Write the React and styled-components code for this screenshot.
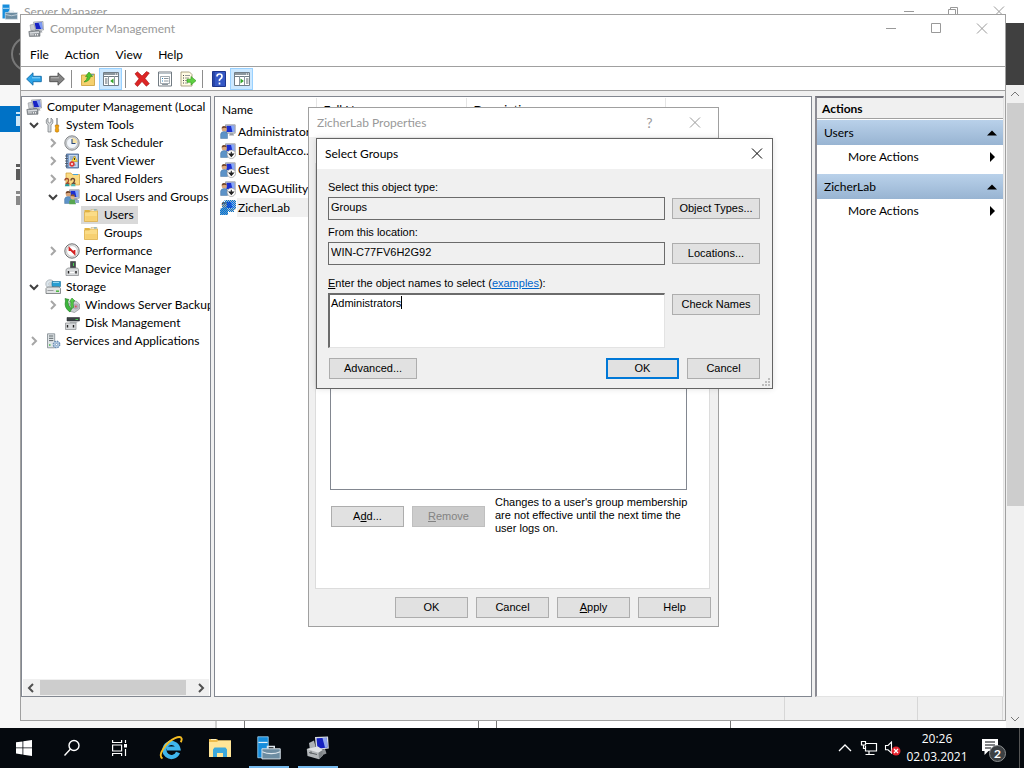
import React from 'react';
import styled, { createGlobalStyle, css } from 'styled-components';

const ui = 'Lato, "Open Sans", sans-serif';
const classic = '"Liberation Sans", Arial, sans-serif';

const Global = createGlobalStyle`
  * { box-sizing: border-box; }
  body { margin: 0; font: 12px/18px ${ui}; color: #000; overflow: hidden; }
  button, input, textarea { font: inherit; color: inherit; margin: 0; }
  svg { display: block; flex: none; }
  h1, h2, p, ul { margin: 0; padding: 0; font: inherit; list-style: none; }
`;

const Screen = styled.div`
  height: 100vh;
  display: flex;
  flex-direction: column;
`;
const Desktop = styled.main`
  position: relative;
  flex: 1;
  min-height: 0;
  overflow: hidden;
`;

/* ---------- window frame ---------- */
const Frame = styled.section`
  display: flex;
  flex-direction: column;
  position: absolute;
  background: ${(p) => p.$bg || '#fff'};
  border: ${(p) => (p.$edge ? `1px solid ${p.$edge}` : '0')};
`;
const ServerFrame = styled(Frame)` inset: 0; `;
const ManagementFrame = styled(Frame)` inset: 14px 18px 7px 20px; `;
const PropertiesFrame = styled(Frame)`
  left: 308px; top: 107px; width: 411px;
`;
const SelectFrame = styled(Frame)`
  left: 316px; top: 138px; width: 457px;
  box-shadow: 0 0 6px rgba(0, 0, 0, 0.12);
`;
const TitleBar = styled.header`
  display: flex;
  align-items: center;
  height: ${(p) => p.$h}px;
  padding-left: ${(p) => p.$left}px;
  padding-right: ${(p) => p.$right || 0}px;
  background: #fff;
  color: ${(p) => (p.$active ? '#000' : '#999')};
  flex: none;
`;
const Title = styled.h1` flex: 1; svg + & { padding-left: 6px; } `;
const CaptionButton = styled.button`
  width: ${(p) => p.$w || 46}px;
  height: 100%;
  border: 0;
  padding: 0;
  background: none;
  display: grid;
  place-items: center;
`;

const Caption = ({ kind, w }) => (
  <CaptionButton $w={w} aria-label={kind}>
    <svg width="12" height="12" viewBox="0 0 12 12" fill="none" stroke="currentColor">
      {kind === 'Minimize' && <path d="M1 5.500h10" />}
      {kind === 'Maximize' && <path d="M.5 .5h9v9h-9z" />}
      {kind === 'Restore' && <path d="M.5 3.500h7v7h-7zM2.500 3.500v-2h7v7h-2" />}
      {kind === 'Close' && <path d="M1 .5l10 10M11 .5L1 10.500" />}
    </svg>
  </CaptionButton>
);

/* ---------- icons ---------- */
const Svg = ({ s = 16, children, ...r }) => (
  <svg width={s} height={s} viewBox="0 0 16 16" fill="none" {...r}>{children}</svg>
);
const ComputerIcon = ({ s }) => (
  <Svg s={s}>
    <path d="M5.500 1l9.500-.5.500 8.500-8 .500z" fill="#d6dae0" stroke="#85898f" strokeWidth=".6" />
    <path d="M6.700 2l7.300-.4.400 6.400-6.500.3z" fill="#1722c4" />
    <path d="M10.500 1.800l3.500-.2.400 6.400-1.400.1z" fill="#7d9cf4" />
    <path d="M2 4l4-1 1.500 5.500L3 10z" fill="#c9ccd0" stroke="#888c90" strokeWidth=".5" />
    <path d="M9 9.500h4.500l1 2H9z" fill="#a2a6ab" />
    <path d="M.8 10.500l9.700-1.300 1.500 2.300v3.700l-10.500.3z" fill="#8f9499" stroke="#53585c" strokeWidth=".5" />
    <path d="M1.500 11.300l9.500-.8v1.500l-9 .7z" fill="#d9dcdf" />
    <path d="M3 13v1.500M5 13v1.500M7.500 13v1.500M9.500 13v1.500" stroke="#eee" />
  </Svg>
);
const ConsoleIcon = () => (
  <svg width="24" height="24" viewBox="0 0 24 24">
    <path d="M9 1l13-.5.800 12L10 14z" fill="#d8dde3" />
    <path d="M10.500 2.200l10.300-.5.700 9.800-10 1.200z" fill="#1420c0" />
    <path d="M16.500 2l4.300-.3.700 9.800-2.500.3z" fill="#8fa6ef" />
    <path d="M3 7l5-2.500 2 8L4 14z" fill="#aeb2b6" />
    <path d="M13 14l6-1 1.500 4.500-5 2z" fill="#8e9296" />
    <path d="M.8 13l11-2.500 5 3.500v5.500L13 23.300 1.500 20z" fill="#b4b8bb" />
    <path d="M.8 13l11-2.500 5 3.500-4.300 2.800z" fill="#e1e3e5" />
    <path d="M12.500 16.800l4.300-2.800v5.500L13 23.300z" fill="#7d8286" />
    <path d="M3 16.500l8 2M5 15.300v2.500" stroke="#5b5f63" />
  </svg>
);
const ToolsIcon = () => (
  <Svg>
    <path d="M3 1v4l1.500 1L6 5V1l1.800 2v3L6 8v7H3V8L1.300 6V3z" fill="#d5d8da" stroke="#74797d" strokeWidth=".7" />
    <path d="M12 1v7" stroke="#7c8185" strokeWidth="1.300" />
    <path d="M10.300 8h3.400v2l-.7 1 .7 1v2.500q-1.700 1.500-3.400 0V12l.7-1-.7-1z" fill="#f0a30d" stroke="#b87405" strokeWidth=".6" />
  </Svg>
);
const ClockIcon = () => (
  <Svg>
    <circle cx="8" cy="8" r="7.200" fill="#cfd1d3" stroke="#7b7e81" strokeWidth=".9" />
    <circle cx="8" cy="8" r="5.500" fill="#f2f6fb" stroke="#9b9fa3" strokeWidth=".5" />
    <path d="M8 2.800A5.200 5.200 0 0 1 13.200 8H8z" fill="#f6e2a4" />
    <path d="M8 4v4.500h3.500" stroke="#2c4a78" strokeWidth="1.100" />
  </Svg>
);
const EventIcon = () => (
  <Svg>
    <path d="M2.500 1h12v14h-12z" fill="#7fa0cb" stroke="#415f8d" strokeWidth=".8" />
    <path d="M5 2h8.500v12H5z" fill="#c6d8ee" />
    <path d="M6 4h6M6 6h6M6 12h6" stroke="#54759f" strokeWidth=".7" />
    <path d="M1 3h3M1 5.500h3M1 8h3M1 10.500h3M1 13h3" stroke="#47505c" strokeWidth=".8" />
    <path d="M10.500 3l3 5.500h-6z" fill="#ffd93b" stroke="#b28b00" strokeWidth=".5" />
    <path d="M10.500 5v2" stroke="#222" strokeWidth=".9" />
    <circle cx="8" cy="11" r="2.700" fill="#db3939" /><path d="M7 10l2 2M9 10l-2 2" stroke="#fff" strokeWidth=".7" />
  </Svg>
);
const FolderIcon = () => (
  <Svg>
    <path d="M1.500 3h5l1 1.500h7v10h-13z" fill="#e2b544" />
    <path d="M8 2.500h6v3H8z" fill="#fff" stroke="#c0a050" strokeWidth=".5" /><path d="M11 3h2.500" stroke="#48a2dc" />
    <path d="M1.500 5h5l1-1h7v10.500h-13z" fill="#fbdc87" stroke="#d7a63c" strokeWidth=".6" />
    <path d="M2.300 9h11.500v4.800H2.300z" fill="#f7d070" />
  </Svg>
);
const SharedIcon = () => (
  <Svg>
    <path d="M2 2h5l1 1.500h7.500V14H2z" fill="#fadb84" stroke="#cf9c32" strokeWidth=".7" />
    <path d="M9 3.500h5" stroke="#48a2dc" />
    <path d="M1 9.500q0-2 1.800-2t1.700 2q0 1.500-1.800 3h2.800" stroke="#a0482c" strokeWidth="1.400" />
    <path d="M7 9.500q0-2 1.800-2t1.700 2q0 1.500-1.800 3h2.800" stroke="#6c4a34" strokeWidth="1.400" />
    <path d="M.8 15.200q.2-2.400 2.400-2.400t2.400 2.400z" fill="#2b9997" /><path d="M6.800 15.200q.2-2.400 2.400-2.400t2.400 2.400z" fill="#52b9b1" />
  </Svg>
);
const UserMonitorIcon = ({ group, down, selected }) => (
  <Svg>
    <path d="M5.500.8h9.700v8.400H6z" fill="#cfd4db" stroke="#74797f" strokeWidth=".6" />
    <path d="M6.500 1.800h7.700v6.200H6.500z" fill="#1d2fd0" /><path d="M11 1.800h3.200v6.200h-1.800z" fill="#86a8fa" />
    <path d="M10 9.200h3l1.200 2.300H9z" fill="#999ea4" />
    <circle cx="4.200" cy="5" r="2.500" fill="#dba77b" /><path d="M1.700 4.600Q1.500 2 4 2t2.800 2.200L4.500 3.700z" fill="#70452a" />
    <path d="M.6 14.500V10q.5-2.500 3.500-2.500T7.500 10v4.500z" fill="#5d93c8" stroke="#33618f" strokeWidth=".4" />
    {group && <><circle cx="8.500" cy="8" r="2.200" fill="#e2b588" /><path d="M6.500 7Q7 5 9 5.200t2 2.300z" fill="#8b5732" /><path d="M5.300 15.300v-3q.6-2 3.200-2t3.300 2v3z" fill="#58a651" /><path d="M11 11h4v3h-4z" fill="#91aad0" /></>}
    {down && <><circle cx="11.300" cy="11.300" r="4.200" fill="#fff" stroke="#888" strokeWidth=".6" /><path d="M11.300 8.700v4M9.200 11l2.100 2.400 2.100-2.400z" stroke="#222" strokeWidth="1.100" fill="#222" /></>}
    {selected && <>
      <defs><pattern id="sel" width="2" height="2" patternUnits="userSpaceOnUse"><path d="M0 0h1v1H0zM1 1h1v1H1z" fill="#0078d7" /></pattern></defs>
      <path d="M5 0H16v9h-2v3H8v3H0V9l2-1V3z" fill="url(#sel)" />
    </>}
  </Svg>
);
const PerformanceIcon = () => (
  <Svg>
    <circle cx="8" cy="8" r="7.200" fill="#e6e6e6" stroke="#6e7072" /><circle cx="8" cy="8" r="5.400" fill="#fff" stroke="#9a9a9a" strokeWidth=".5" />
    <path d="M5.500 8V5.500L10.500 10.500V7" stroke="#d42121" strokeWidth="1.800" />
  </Svg>
);
const DeviceIcon = () => (
  <Svg>
    <path d="M6.500.5h5v6.500h-5z" fill="#44494c" stroke="#26292b" strokeWidth=".5" /><path d="M9.500 2v3" stroke="#48ce50" />
    <path d="M2 8.500L4 7h9.500l1 1.500v6H2z" fill="#d8dadc" stroke="#85888b" strokeWidth=".7" />
    <path d="M4.500 10v2.500M12 10v2.500" stroke="#222" strokeWidth="1.400" /><path d="M6 11.500h4" stroke="#fff" />
  </Svg>
);
const StorageIcon = () => (
  <Svg>
    <circle cx="5" cy="5" r="4.200" fill="#dce5eb" stroke="#90999f" strokeWidth=".6" /><circle cx="5" cy="5" r="1.200" fill="#fff" stroke="#8b9297" strokeWidth=".5" />
    <path d="M7 2.500h8.500v5H7z" fill="#289ed2" stroke="#176b93" strokeWidth=".6" /><path d="M8 3.500h6" stroke="#93d6f2" />
    <path d="M1 9.500L2.500 8h11.700l1.300 1.500v5H1z" fill="#e0e2e3" stroke="#6f7376" strokeWidth=".8" /><path d="M2.500 11.500h6" stroke="#9a9da0" /><path d="M11 12.200h3" stroke="#48b93b" strokeWidth="1.500" />
  </Svg>
);
const BackupIcon = () => (
  <Svg>
    <path d="M5 6l7-2 3.500 3v5l-5 3.500L5 14z" fill="#cdd2d4" stroke="#7b8285" strokeWidth=".6" />
    <circle cx="11.800" cy="9.500" r="3" fill="#b3a9b8" /><circle cx="11.800" cy="9.500" r="1" fill="#d55" />
    <path d="M1 1.500l4 1-1 1.500q-.5 5 3.500 8l-1.500 3Q-.3 11 1.500 4z" fill="#3cb53c" stroke="#1b7b1d" strokeWidth=".6" />
    <path d="M5.500 4.500L8 1l3 3H9.500q-.5 3 0 6.500L7.500 12Q6 8 7 4.700z" fill="#54cb48" stroke="#1b7b1d" strokeWidth=".5" />
  </Svg>
);
const DiskIcon = () => (
  <Svg>
    <path d="M3 2.500h12.500v3.500H3z" fill="#3d4245" stroke="#1f2224" strokeWidth=".5" /><path d="M11.500 4.500h2.500" stroke="#48ce50" />
    <path d="M5 6h9l-1 2H6z" fill="#b9bcbe" />
    <path d="M1.500 8h10.500v6.500H1.500z" fill="#d8dadc" stroke="#85888b" strokeWidth=".7" />
    <path d="M3.500 10v2.500M9.500 10v2.500" stroke="#222" strokeWidth="1.400" />
  </Svg>
);
const ServicesIcon = () => (
  <Svg>
    <path d="M2.500.8h7.200v14H2.500z" fill="#dfe4e7" stroke="#7c858b" strokeWidth=".8" />
    <path d="M4 3h4.300M4 5.300h4.300M4 7.600h4.300" stroke="#5b6469" /><path d="M4 12h1.500" stroke="#49b94a" strokeWidth="1.300" />
    <circle cx="11.500" cy="11.500" r="3.200" fill="#b9cfe6" stroke="#6e8fb4" strokeWidth="1.400" strokeDasharray="1.600 .9" /><circle cx="11.500" cy="11.500" r="1.100" fill="#fff" stroke="#6485aa" strokeWidth=".6" />
  </Svg>
);
const Arrow = ({ flip }) => (
  <Svg>
    <path transform={flip ? 'translate(16 0) scale(-1 1)' : undefined} d="M.6 8L7 1.800v3.500h8.300v5.400H7v3.500z"
      fill={flip ? '#858585' : '#2ba3e8'} stroke={flip ? '#4c4c4c' : '#136ba8'} strokeWidth=".9" />
    <path d={flip ? 'M2 6.800h8' : 'M6 6.800h8'} stroke={flip ? '#b6b6b6' : '#8fd4fa'} />
  </Svg>
);
const UpFolderIcon = () => (
  <Svg>
    <path d="M1.500 4h5l1-1h7v11.500h-13z" fill="#f5d06e" stroke="#c99d36" strokeWidth=".8" /><path d="M11 3.800h3" stroke="#4892c8" />
    <path d="M4 11Q7 9 7.500 5.500H5.500L9 1l3.500 4.500h-2Q9.500 10.500 4 11z" fill="#4fc52f" stroke="#2f8d17" strokeWidth=".6" />
  </Svg>
);
const PaneIcon = ({ right }) => (
  <Svg>
    <path d="M.5 1.500h15v13H.5z" fill="#fff" stroke="#717d86" /><path d="M1 3h14" stroke="#8c979e" strokeWidth="2" />
    <path d="M12 3h1M14 3h1" stroke="#fff" /><path d="M1 5.500h14" stroke="#717d86" />
    <path d={right ? 'M10.500 5v9M5.500 5v9' : 'M5.500 5v9M11.500 5v9'} stroke="#8c979e" />
    <path d={right ? 'M6.500 7.500v5L9.800 10z' : 'M10.500 7.500v5L7.200 10z'} fill="#31a427" />
    <path d={right ? 'M12 8h2.500M12 10h2.500M12 12h2.500' : 'M2 8h2.500M2 10h2.500M2 12h2.500'} stroke="#5a656d" />
  </Svg>
);
const DeleteIcon = () => (
  <Svg><path d="M1 2.800L3.500.8 8 5l4.500-4.500L15.300 2 11 7.500l4.300 5.200-3 2.500L8 10.500l-4.500 5L.8 13 5 7.800z" fill="#dd2525" stroke="#a51313" strokeWidth=".6" /></Svg>
);
const PropsIcon = () => (
  <Svg>
    <path d="M1.500 1h13v14h-13z" fill="#fff" stroke="#727b82" /><path d="M2 2.500h12" stroke="#b9c3ca" />
    <path d="M3.500 5.500h9v7h-9z" stroke="#8c969d" strokeWidth=".8" /><path d="M5 7.500h1M5 10h1" stroke="#2f83bd" /><path d="M7 7.500h4.500M7 10h4.500M5 13.500h6" stroke="#8c969d" />
  </Svg>
);
const ExportIcon = () => (
  <Svg>
    <path d="M1 1h8.500L12 3.500V15H1z" fill="#fffbe4" stroke="#99916b" strokeWidth=".8" /><path d="M3 4.500h1M3 7h1M3 9.500h1M3 12h1" stroke="#444" /><path d="M5 4.500h5M5 7h4M5 9.500h2M5 12h3" stroke="#9a9a9a" />
    <path d="M7 8.200h4V5.500l5 4.200-5 4.300v-2.700H7z" fill="#5fd043" stroke="#2b9618" strokeWidth=".6" />
  </Svg>
);
const HelpIcon = () => (
  <Svg>
    <path d="M1.500.5h13v15h-13z" fill="#3558c5" stroke="#1e358c" /><path d="M3 1v14" stroke="#1e358c" />
    <path d="M6 5.500Q6 3 8.500 3T11 5.300Q11 7 9.500 7.800T8.500 10M8.500 11.500v2" stroke="#fff" strokeWidth="1.700" />
  </Svg>
);
const ServerIcon = ({ s = 16 }) => (
  <Svg s={s}>
    <path d="M.5.500h7v14h-7z" fill="#168ddc" stroke="#a9d9f5" strokeWidth={s > 20 ? '.5' : '0'} /><path d="M1 4.300h6" stroke="#e6f4fc" strokeWidth=".8" />
    <path d="M7 8.300V7h4.500v1.300" stroke="#dfe8ee" /><path d="M3.300 8.500h12.200v6.800H3.300z" fill="#6d8da2" stroke="#dfe8ee" strokeWidth=".6" /><path d="M3.500 10.500q6 2.500 12 0" stroke="#dfe8ee" strokeWidth=".7" />
  </Svg>
);
const Chevron = ({ dir = 'right', color = '#a2a2a2', w = 2 }) => {
  const d = { right: 'M3 1l4 4-4 4', left: 'M7 1L3 5l4 4', down: 'M1 3l4 4 4-4', up: 'M1 7l4-4 4 4' }[dir];
  return <svg width="10" height="10" viewBox="0 0 10 10" fill="none" stroke={color} strokeWidth={w}><path d={d} /></svg>;
};

/* ---------- server manager ---------- */
const ServerHeader = styled.div`
  height: 62px; flex: none; background: #404040; padding: 13px 11px;
`;
const ServerBody = styled.div` flex: 1; display: flex; min-height: 0; background: #fff; `;
const SideNav = styled.nav`
  width: 217px; background: #f7f7f7; border-right: 2px solid #cfcfcf; padding-top: 21px;
  display: flex; flex-direction: column;
`;
const NavItem = styled.button`
  height: 26px; border: 0; padding: 0 0 0 16px; text-align: left;
  background: ${(p) => (p.$active ? '#0072c6' : 'transparent')};
`;
const NavList = styled.div` padding-top: 26px; display: flex; flex-direction: column; `;
const Dashboard = styled.div` flex: 1; display: flex; gap: 17px; padding-left: 27px; `;
const Panel = styled.div` width: 235px; border: solid #777; border-width: 0 1px; `;
const VScroll = styled.div`
  width: 18px; background: #f0f0f0; display: flex; flex-direction: column; align-items: center;
  justify-content: space-between; padding: 4px 0;
`;
const VThumb = styled.div` width: 17px; flex: 0 0 403px; background: #cdcdcd; margin: 4px 0 auto; `;

const ServerManager = () => (
  <ServerFrame>
    <TitleBar $h={23} $left={2} $right={2}>
      <ServerIcon /><Title>Server Manager</Title>
      <Caption kind="Minimize" w={45} /><Caption kind="Restore" w={45} /><Caption kind="Close" />
    </TitleBar>
    <ServerHeader>
      <svg width="36" height="36" viewBox="0 0 36 36" fill="none" stroke="#787878" strokeWidth="2">
        <circle cx="18" cy="18" r="17" /><path d="M26 18H9M16 11l-7 7 7 7" />
      </svg>
    </ServerHeader>
    <ServerBody>
      <SideNav>
        <NavItem $active aria-label="Dashboard"><svg width="16" height="16"><path d="M0 1h16v14H0z" fill="#cfe8f8" /><path d="M0 4h16" stroke="#0072c6" strokeWidth="2" /></svg></NavItem>
        <NavList>
          <NavItem aria-label="Local Server"><svg width="16" height="20"><path d="M0 3h16v3H0zM0 8h16v11H0z" fill="#5b5b5b" /></svg></NavItem>
          <NavItem aria-label="All Servers"><svg width="16" height="18"><path d="M0 3h16v3H0zM0 8h16v9H0z" fill="#888" /></svg></NavItem>
        </NavList>
      </SideNav>
      <Dashboard><Panel /><Panel /></Dashboard>
      <VScroll><Chevron dir="up" w={1} color="#777" /><VThumb /><Chevron dir="down" w={1} color="#777" /></VScroll>
    </ServerBody>
  </ServerFrame>
);

/* ---------- computer management ---------- */
const MenuBar = styled.nav` display: flex; height: 23px; padding-left: 1px; flex: none; `;
const MenuItem = styled.button` border: 0; background: none; padding: 0 8px; line-height: 23px; `;
const ToolBar = styled.div`
  display: flex; align-items: center; height: 25px; padding: 1px 0 0 1px; flex: none;
  border: solid; border-width: 1px 0; border-color: #a0a0a0 #d9d9d9;
`;
const ToolButton = styled.button`
  width: 23px; height: 22px; padding: 0; display: grid; place-items: center;
  border: 1px solid ${(p) => (p.$on ? '#99d1ff' : 'transparent')};
  background: ${(p) => (p.$on ? '#cce8ff' : 'transparent')};
`;
const ToolRule = styled.span` width: 1px; height: 18px; margin: 0 4px 0 3px; background: #8d8d8d; `;
const Panes = styled.div`
  flex: 1; min-height: 0; background: #f0f0f0; padding: 5px 1px 0 0;
  display: grid; grid-template-columns: 190px 1fr 189px; gap: 3px;
`;
const Pane = styled.div`
  background: #fff; border: 1px solid #828790; overflow: hidden; min-width: 0;
  display: flex; flex-direction: column;
`;
const Tree = styled.ul` padding-top: 1px; flex: 1; overflow: hidden; `;
const TreeRow = styled.li`
  display: flex; align-items: center; height: 18px; white-space: nowrap;
  padding-left: ${(p) => p.$level * 19 - 12}px;
  &:first-child { padding-left: 4px; }
`;
const Twisty = styled.span` width: 16px; flex: none; `;
const TreeLabel = styled.span`
  display: flex; align-items: center; gap: 5px; height: 18px;
  padding-right: 4px;
  ${(p) => p.$selected && css`background: #d9d9d9; margin-left: -2px; padding-left: 2px;`}
`;
const HScroll = styled.div`
  height: 17px; margin: 0 1px; background: #f0f0f0; display: flex; align-items: center; padding: 0 3px;
`;
const HThumb = styled.div` flex: 1; margin: 0 10px 0 4px; height: 15px; background: #cdcdcd; `;

const tree = [
  [0, '', ComputerIcon, 'Computer Management (Local'],
  [1, 'down', ToolsIcon, 'System Tools'],
  [2, 'right', ClockIcon, 'Task Scheduler'],
  [2, 'right', EventIcon, 'Event Viewer'],
  [2, 'right', SharedIcon, 'Shared Folders'],
  [2, 'down', (p) => <UserMonitorIcon group {...p} />, 'Local Users and Groups'],
  [3, '', FolderIcon, 'Users', true],
  [3, '', FolderIcon, 'Groups'],
  [2, 'right', PerformanceIcon, 'Performance'],
  [2, '', DeviceIcon, 'Device Manager'],
  [1, 'down', StorageIcon, 'Storage'],
  [2, 'right', BackupIcon, 'Windows Server Backup'],
  [2, '', DiskIcon, 'Disk Management'],
  [1, 'right', ServicesIcon, 'Services and Applications'],
];

const Table = styled.table`
  border-collapse: collapse; table-layout: fixed; width: 450px; margin-top: 1px;
`;
const Th = styled.th`
  width: ${(p) => p.$w}px; height: 24px; padding: 0 7px; text-align: left; font-weight: 400;
  border-right: 1px solid #e5e5e5;
`;
const Td = styled.td` height: 19px; padding: 0 0 0 5px; white-space: nowrap; `;
const User = styled.span` display: flex; gap: 1px; align-items: center; `;
const UserName = styled.span`
  padding: 0 1px; line-height: 19px; flex: 1; background: ${(p) => (p.$selected ? '#f0f0f0' : 'none')};
`;
const users = [['Administrator'], ['DefaultAcco...', true], ['Guest', true], ['WDAGUtility...', true], ['ZicherLab', false, true]];

const ActionsPane = styled.aside`
  background: #fff; border: solid; border-width: 2px 1px 1px 2px; border-color: #73737b #e3e3e3 #e3e3e3 #8c8c94;
`;
const ActionsTitle = styled.h2`
  font-weight: 700; height: 21px; line-height: 22px; padding-left: 5px; background: #f0f0f0;
  border-bottom: 1px solid #a0a0a0; margin-bottom: 1px;
`;
const ActionsGroup = styled.button`
  display: flex; justify-content: space-between; align-items: center; width: 100%; height: 25px;
  border: 0; padding: 0 6px 0 7px; background: linear-gradient(#b9d1ea, #98b4d2);
`;
const ActionsItem = styled(ActionsGroup)`
  height: 24px; margin-bottom: 5px; padding-left: 31px; background: none;
`;
const Triangle = ({ side }) => (
  <svg width="10" height="10" viewBox="0 0 10 10"><path d={side ? 'M3 0l5 5-5 5z' : 'M0 7.500l5-5 5 5z'} /></svg>
);
const StatusBar = styled.footer`
  height: 23px; flex: none; background: #f0f0f0; display: flex; justify-content: flex-end; padding-right: 2px;
`;
const StatusCell = styled.span` width: ${(p) => p.$w}px; border-left: 1px solid #d7d7d7; `;
const EndCell = styled(StatusCell)` border-right: 1px solid #d7d7d7; `;

const ComputerManagement = () => (
  <ManagementFrame $edge="#a0a0a0">
    <TitleBar $h={28} $left={7}>
      <ComputerIcon /><Title>Computer Management</Title>
      <Caption kind="Minimize" /><Caption kind="Maximize" w={45} /><Caption kind="Close" />
    </TitleBar>
    <MenuBar>{['File', 'Action', 'View', 'Help'].map((m) => <MenuItem key={m}>{m}</MenuItem>)}</MenuBar>
    <ToolBar>
      <ToolButton aria-label="Back"><Arrow /></ToolButton>
      <ToolButton aria-label="Forward"><Arrow flip /></ToolButton>
      <ToolRule />
      <ToolButton aria-label="Up"><UpFolderIcon /></ToolButton>
      <ToolButton $on aria-label="Show console tree"><PaneIcon /></ToolButton>
      <ToolRule />
      <ToolButton aria-label="Delete"><DeleteIcon /></ToolButton>
      <ToolButton aria-label="Properties"><PropsIcon /></ToolButton>
      <ToolButton aria-label="Export list"><ExportIcon /></ToolButton>
      <ToolRule />
      <ToolButton aria-label="Help"><HelpIcon /></ToolButton>
      <ToolButton $on aria-label="Show action pane"><PaneIcon right /></ToolButton>
    </ToolBar>
    <Panes>
      <Pane>
        <Tree>
          {tree.map(([level, open, Icon, label, selected]) => (
            <TreeRow key={label} $level={level}>
              {level > 0 && <Twisty>{open && <Chevron dir={open} color={open === 'down' ? '#404040' : '#a6a6a6'} />}</Twisty>}
              <TreeLabel $selected={selected}><Icon />{label}</TreeLabel>
            </TreeRow>
          ))}
        </Tree>
        <HScroll><Chevron dir="left" color="#505050" /><HThumb /><Chevron color="#505050" /></HScroll>
      </Pane>
      <Pane>
        <Table>
          <thead><tr><Th $w={101}>Name</Th><Th $w={150}>Full Name</Th><Th $w={199}>Description</Th></tr></thead>
          <tbody>
            {users.map(([name, down, selected]) => (
              <tr key={name}>
                <Td><User><UserMonitorIcon down={down} selected={selected} /><UserName $selected={selected}>{name}</UserName></User></Td>
                <Td /><Td />
              </tr>
            ))}
          </tbody>
        </Table>
      </Pane>
      <ActionsPane>
        <ActionsTitle>Actions</ActionsTitle>
        <ActionsGroup>Users<Triangle /></ActionsGroup>
        <ActionsItem>More Actions<Triangle side /></ActionsItem>
        <ActionsGroup>ZicherLab<Triangle /></ActionsGroup>
        <ActionsItem>More Actions<Triangle side /></ActionsItem>
      </ActionsPane>
    </Panes>
    <StatusBar><StatusCell $w={133} /><EndCell $w={86} /></StatusBar>
  </ManagementFrame>
);

/* ---------- dialogs ---------- */
const Push = styled.button`
  width: ${(p) => (p.$wide ? 88 : 73)}px; height: 21px; padding: 0; flex: none;
  font: 11px/13px ${classic};
  background: #e1e1e1; border: 1px solid #adadad;
  ${(p) => p.$default && css`border: 2px solid #0078d7;`}
  &:disabled { background: #ccc; border-color: #bfbfbf; color: #838383; }
`;
const Sheet = styled.div`
  margin: 26px 8px 0 6px; background: #fff; border: 1px solid #dcdcdc; padding: 24px 22px 53px 14px;
`;
const MemberList = styled.div` height: 302px; border: 1px solid #828790; `;
const MemberRow = styled.div` display: flex; gap: 8px; padding: 6px 0 0 1px; `;
const MemberButtons = styled.div` display: flex; gap: 8px; padding-top: 10px; `;
const Note = styled.p` font: 11px/13px ${classic}; padding-left: 2px; flex: 1; white-space: pre; `;
const DialogFooter = styled.div` display: flex; justify-content: flex-end; gap: 8px; padding: 8px 7px 8px 0; `;
const HelpMark = styled.button` border: 0; padding: 0; width: 45px; background: none; font-size: 14px; `;

const PropertiesDialog = () => (
  <PropertiesFrame $bg="#f0f0f0" $edge="#a0a0a0">
    <TitleBar $h={29} $left={8}>
      <Title>ZicherLab Properties</Title>
      <HelpMark>?</HelpMark><Caption kind="Close" />
    </TitleBar>
    <Sheet>
      <MemberList />
      <MemberRow>
        <MemberButtons><Push>A<u>d</u>d...</Push><Push disabled><u>R</u>emove</Push></MemberButtons>
        <Note>{"Changes to a user's group membership\nare not effective until the next time the\nuser logs on."}</Note>
      </MemberRow>
    </Sheet>
    <DialogFooter><Push>OK</Push><Push>Cancel</Push><Push><u>A</u>pply</Push><Push>Help</Push></DialogFooter>
  </PropertiesFrame>
);

const Form = styled.form` position: relative; padding: 12px 12px 9px 11px; font: 11px/13px ${classic}; `;
const Label = styled.label` display: block; margin-bottom: 3px; `;
const FieldRow = styled.div`
  display: flex; gap: 7px; margin-bottom: ${(p) => p.$after}px;
  & > button { margin-top: 1px; }
`;
const Field = styled.input`
  flex: 1; min-width: 0; height: 23px; padding: 0 2px 3px; background: #f0f0f0; border: 1px solid #6b6b6b; border-radius: 0; outline: 0;
`;
const NamesWrap = styled.div` flex: 1; position: relative; display: flex; `;
const Names = styled.textarea`
  flex: 1; min-width: 0; height: 55px; resize: none; outline: 0; background: #fff; padding: 2px 1px;
  border: solid; border-width: 2px 1px 1px 2px; border-color: #6b6b6b #e3e3e3 #e3e3e3 #6b6b6b; border-radius: 0;
`;
const Caret = styled.span` position: absolute; left: 73px; top: 3px; width: 1px; height: 13px; background: #000; `;
const Link = styled.a` color: #0066cc; `;
const FormButtons = styled.div` display: flex; gap: 8px; padding-left: 1px; `;
const AdvancedPush = styled(Push)` margin-right: auto; `;
const Grip = styled.svg` position: absolute; right: 1px; bottom: 1px; `;

const SelectDialog = () => (
  <SelectFrame $bg="#f0f0f0" $edge="#646464">
    <TitleBar $h={30} $left={8} $active>
      <Title>Select Groups</Title><Caption kind="Close" w={30} />
    </TitleBar>
    <Form onSubmit={(e) => e.preventDefault()}>
      <Label htmlFor="type">Select this object type:</Label>
      <FieldRow $after={6}><Field id="type" readOnly value="Groups" /><Push type="button" $wide>Object Types...</Push></FieldRow>
      <Label htmlFor="location">From this location:</Label>
      <FieldRow $after={12}><Field id="location" readOnly value="WIN-C77FV6H2G92" /><Push type="button" $wide>Locations...</Push></FieldRow>
      <Label htmlFor="names"><u>E</u>nter the object names to select (<Link href="#examples">examples</Link>):</Label>
      <FieldRow $after={10}>
        <NamesWrap><Names id="names" defaultValue="Administrators" /><Caret /></NamesWrap>
        <Push type="button" $wide>Check Names</Push>
      </FieldRow>
      <FormButtons><AdvancedPush type="button" $wide>Advanced...</AdvancedPush><Push $default>OK</Push><Push type="button">Cancel</Push></FormButtons>
      <Grip width="10" height="10" fill="#bdbdbd"><path d="M7 1h2v2H7zM4 4h2v2H4zM7 4h2v2H7zM1 7h2v2H1zM4 7h2v2H4zM7 7h2v2H7z" /></Grip>
    </Form>
  </SelectFrame>
);

/* ---------- taskbar ---------- */
const TaskBar = styled.footer`
  height: 40px; flex: none; background: #05090e; color: #fff; display: flex; align-items: stretch;
`;
const TaskButton = styled.button`
  width: ${(p) => (p.$app ? 49 : 48)}px; border: 0; padding: 0; background: none; display: grid; place-items: center;
  ${(p) => p.$running && css`background: linear-gradient(#76b9ed, #76b9ed) center bottom / 40px 2px no-repeat;`}
`;
const Apps = styled.div` display: flex; padding-left: 2px; `;
const Tray = styled.div` margin-left: auto; display: flex; align-items: center; `;
const TrayButton = styled.button` width: 24px; height: 40px; border: 0; padding: 0; background: none; color: #fff; display: grid; place-items: center; `;
const Clock = styled.time` width: 64px; text-align: center; font-family: "Open Sans", sans-serif; letter-spacing: normal; white-space: nowrap; `;
const Notice = styled(TrayButton)` width: 50px; `;
const Peek = styled.button` width: 5px; height: 40px; padding: 0; border: 0; border-left: 1px solid #555; background: none; `;

const Taskbar = () => (
  <TaskBar>
    <TaskButton aria-label="Start">
      <svg width="16" height="16" fill="#fff"><path d="M0 2.300L6.500 1.400V7.500H0zM7.300 1.300L16 0v7.500H7.300zM0 8.300h6.500v6.200L0 13.600zM7.300 8.300H16V16l-8.700-1.300z" /></svg>
    </TaskButton>
    <TaskButton aria-label="Search">
      <svg width="18" height="18" fill="none" stroke="#fff" strokeWidth="1.400"><circle cx="11" cy="6.500" r="5" /><path d="M7.500 10L1.500 16.500" /></svg>
    </TaskButton>
    <TaskButton aria-label="Task View">
      <svg width="18" height="16" fill="none" stroke="#fff" strokeWidth="1.200"><path d="M1.600 0v2.500h9V0M1.600 5h9v6h-9zM1.600 16v-2.500h9V16M14.500 0v3M14.500 9v7" /><path d="M13 4h3v3.500h-3z" fill="#fff" stroke="none" /></svg>
    </TaskButton>
    <Apps>
      <TaskButton $app aria-label="Internet Explorer">
        <svg width="24" height="24" viewBox="0 0 24 24" fill="none">
          <path d="M19 16.500A7 7 0 1 1 19.300 12.500H8" stroke="#3fb5ec" strokeWidth="4.200" />
          <path d="M6 10Q8 5 13 4.500" stroke="#a5e1fb" strokeWidth="1" />
          <path d="M3.500 22.500Q-.5 20 4.500 12.500T16 2.200Q21.500-.3 22.600 2.500 23 4 21.800 6.200" stroke="#f5bd23" strokeWidth="1.900" />
        </svg>
      </TaskButton>
      <TaskButton $app aria-label="File Explorer">
        <svg width="22" height="20" viewBox="0 0 22 20"><path d="M0 1h8l1.500 1.500H22V19H0z" fill="#ecbb4b" /><path d="M0 4h8l1.500-1.500H22V19H0z" fill="#ffe597" /><path d="M2 1.500h5" stroke="#fff2c0" /><path d="M4 11.500l1.500-2h11l1.500 2V19h-4v-4H8v4H4z" fill="#3ba8dc" /></svg>
      </TaskButton>
      <TaskButton $app $running aria-label="Server Manager"><ServerIcon s={24} /></TaskButton>
      <TaskButton $app $running aria-label="Computer Management"><ConsoleIcon /></TaskButton>
    </Apps>
    <Tray>
      <TrayButton aria-label="Show hidden icons"><svg width="14" height="8" fill="none" stroke="#fff" strokeWidth="1.300"><path d="M1 7l6-6 6 6" /></svg></TrayButton>
      <TrayButton aria-label="Network"><svg width="18" height="16" fill="none" stroke="#fff" strokeWidth="1.200"><path d="M6 3.500h10.500v7.500h-11V6M9 11v3.500M5.500 14.500h9" /><path d="M1.500 1.500h4v3.500h-4zM3.500 5v3.500h2" /></svg></TrayButton>
      <TrayButton aria-label="Volume"><svg width="18" height="16" fill="none"><path d="M1.500 5.500H4L7.500 2v11L4 9.800H1.500z" stroke="#fff" strokeWidth="1.100" /><circle cx="12" cy="11" r="4.500" fill="#e5232e" /><path d="M10 9l4 4M14 9l-4 4" stroke="#fff" strokeWidth="1.200" /></svg></TrayButton>
      <Clock>20:26<br />02.03.2021</Clock>
      <Notice aria-label="Notifications">
        <svg width="28" height="28" viewBox="0 0 28 28">
          <path d="M2 5h16v12H8.500l-4 4v-4H2z" fill="#fff" /><path d="M5 8h10M5 11h10M5 14h6" stroke="#05090e" strokeWidth="1.200" />
          <circle cx="17.500" cy="19.500" r="8" fill="#3c4043" stroke="#8b8e90" />
          <text x="17.500" y="24" fill="#fff" fontSize="12" fontWeight="700" textAnchor="middle">2</text>
        </svg>
      </Notice>
      <Peek aria-label="Show desktop" />
    </Tray>
  </TaskBar>
);

export default function App() {
  return (
    <Screen>
      <Global />
      <Desktop>
        <ServerManager />
        <ComputerManagement />
        <PropertiesDialog />
        <SelectDialog />
      </Desktop>
      <Taskbar />
    </Screen>
  );
}
